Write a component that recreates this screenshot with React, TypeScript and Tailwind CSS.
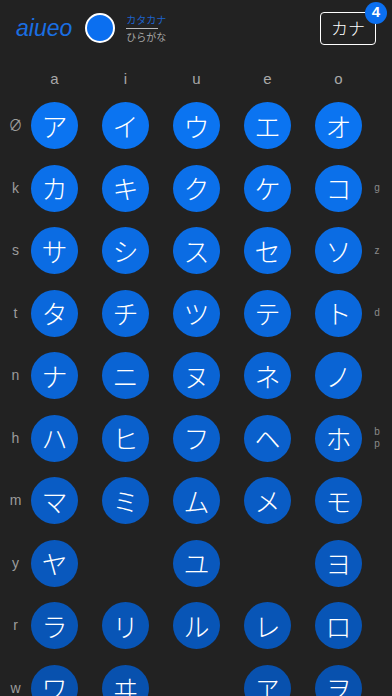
import React from 'react';

type Row = {
  label: string;
  right?: string[];
  kana: (string | null)[];
  color: string;
};

const rows: Row[] = [
  { label: '∅', kana: ['ア', 'イ', 'ウ', 'エ', 'オ'], color: 'bg-[#0b74f1]' },
  { label: 'k', right: ['g'], kana: ['カ', 'キ', 'ク', 'ケ', 'コ'], color: 'bg-[#0b70ea]' },
  { label: 's', right: ['z'], kana: ['サ', 'シ', 'ス', 'セ', 'ソ'], color: 'bg-[#0b6ce3]' },
  { label: 't', right: ['d'], kana: ['タ', 'チ', 'ツ', 'テ', 'ト'], color: 'bg-[#0a68dc]' },
  { label: 'n', kana: ['ナ', 'ニ', 'ヌ', 'ネ', 'ノ'], color: 'bg-[#0a64d4]' },
  { label: 'h', right: ['b', 'p'], kana: ['ハ', 'ヒ', 'フ', 'ヘ', 'ホ'], color: 'bg-[#0a60cc]' },
  { label: 'm', kana: ['マ', 'ミ', 'ム', 'メ', 'モ'], color: 'bg-[#095cc5]' },
  { label: 'y', kana: ['ヤ', null, 'ユ', null, 'ヨ'], color: 'bg-[#0958bd]' },
  { label: 'r', kana: ['ラ', 'リ', 'ル', 'レ', 'ロ'], color: 'bg-[#0855b6]' },
  { label: 'w', kana: ['ワ', 'ヰ', null, 'ヱ', 'ヲ'], color: 'bg-[#0851ae]' },
];

const vowels = ['a', 'i', 'u', 'e', 'o'];

const sans = "font-['Liberation_Sans','Noto_Sans_CJK_JP',sans-serif]";
const jp = "font-['Noto_Sans_CJK_JP',sans-serif]";

export default function App() {
  return (
    <div className={`h-[696px] w-[392px] overflow-hidden bg-[#222222] ${sans}`}>
      {/* Header */}
      <div className="relative flex h-[56px] items-center">
        <span className="ml-[16px] text-[23px] italic leading-none text-[#1a6fe2]">aiueo</span>
        <div className="ml-[13px] h-[30px] w-[30px] rounded-full border-2 border-white bg-[#0b6ff0]" />
        <div className={`ml-[11px] flex flex-col items-start ${jp}`}>
          <span className="text-[10px] leading-[12px] text-[#1d63cc]">カタカナ</span>
          <div className="my-[2px] h-px w-[32px] bg-[#bbbbbb]" />
          <span className="text-[10px] leading-[12px] text-[#a6a6a6]">ひらがな</span>
        </div>
        <div className="ml-auto mr-[16px] relative">
          <div className={`flex h-[33px] w-[56px] items-center justify-center rounded-[4px] border-[1.5px] border-white text-[17px] font-light text-white ${jp}`}>
            カナ
          </div>
          <div className="absolute -right-[11px] -top-[10px] flex h-[22px] w-[22px] items-center justify-center rounded-full bg-[#0b6ff0] text-[15px] font-bold text-white">
            4
          </div>
        </div>
      </div>

      {/* Column labels */}
      <div className="flex h-[46px] items-center">
        <div className="w-[31px]" />
        <div className="flex gap-[24px]">
          {vowels.map((v) => (
            <span key={v} className="w-[47px] text-center text-[15px] text-[#a8a8a8]">{v}</span>
          ))}
        </div>
      </div>

      {/* Kana grid */}
      <div className="flex flex-col gap-[15.5px]">
        {rows.map((row) => (
          <div key={row.label} className="flex items-center">
            <span className="w-[31px] text-center text-[14px] text-[#9c9c9c]">{row.label}</span>
            <div className="flex gap-[24px]">
              {row.kana.map((k, i) =>
                k ? (
                  <div
                    key={i}
                    className={`flex h-[47px] w-[47px] items-center justify-center rounded-full ${row.color} text-[26px] font-light leading-none text-white ${jp}`}
                  >
                    {k}
                  </div>
                ) : (
                  <div key={i} className="h-[47px] w-[47px]" />
                )
              )}
            </div>
            <div className="flex w-[30px] flex-col items-center text-[10px] leading-[12px] text-[#8a8a8a]">
              {row.right?.map((r) => (
                <span key={r}>{r}</span>
              ))}
            </div>
          </div>
        ))}
      </div>
    </div>
  );
}
